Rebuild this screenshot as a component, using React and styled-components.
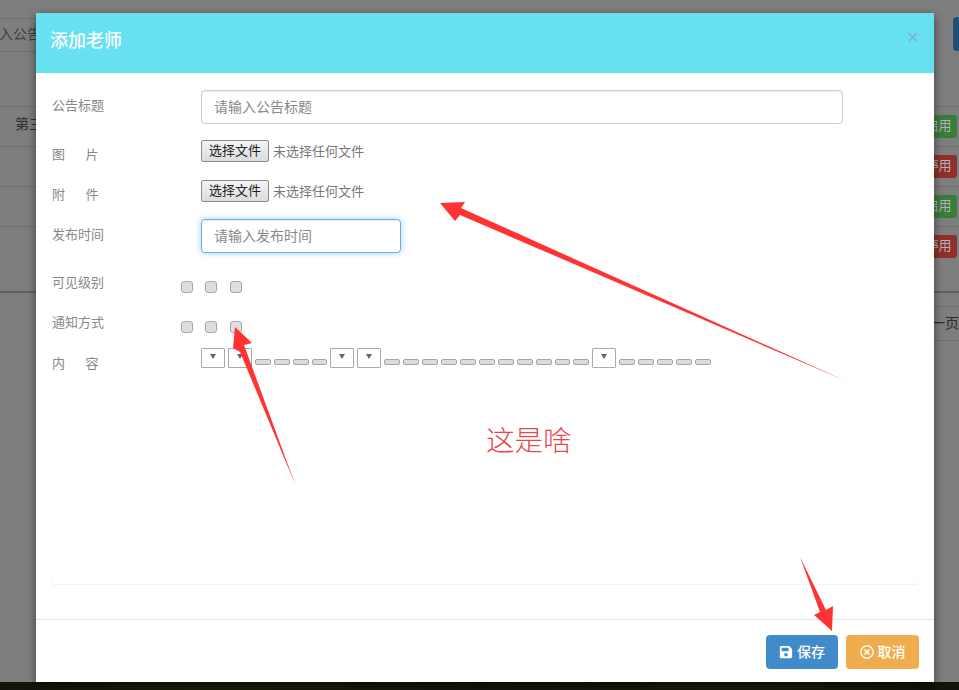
import React from 'react';
import styled, { createGlobalStyle } from 'styled-components';
import { FaSave, FaRegTimesCircle } from 'react-icons/fa';

const fontStack = '"Noto Sans CJK SC", "Liberation Sans", sans-serif';

const GlobalStyle = createGlobalStyle`
    html, body {
        margin: 0;
        padding: 0;
        overflow: hidden;
    }
    body {
        font-family: ${ fontStack };
        font-size: 14px;
    }
`;

const Page = styled.div`
    position: relative;
    display: flex;
    flex-direction: column;
    width: 959px;
    height: 690px;
    overflow: hidden;
    background: #7e7e7e;
`;

const Toolbar = styled.div`
    display: flex;
    justify-content: space-between;
    height: 89px;
    padding-top: 17px;
    box-sizing: content-box;
`;

const SearchBox = styled.div`
    width: 100px;
    height: 32px;
    margin-top: 1px;
    margin-left: -1px;
    border-top: 1px solid #6f6f6f;
    border-bottom: 1px solid #6f6f6f;
    color: #3f3f3f;
    line-height: 28px;
    white-space: nowrap;
`;

const SearchButton = styled.div`
    width: 20px;
    height: 34px;
    margin-right: -14px;
    border-radius: 4px;
    background: #1f4f78;
`;

const Table = styled.div`
    height: 185px;
    border-bottom: 2px solid #5f5f5f;
`;

const TableRow = styled.div`
    display: flex;
    justify-content: space-between;
    align-items: center;
    height: 40px;
    padding: 0 2px 0 15px;
    box-sizing: border-box;
    border-top: 1px solid #6e6e6e;
    color: #2f2f2f;
`;

const RowText = styled.span`
    padding-bottom: 8px;
`;

const StatusBadge = styled.div`
    width: 36px;
    height: 23px;
    padding-right: 1px;
    box-sizing: border-box;
    border-radius: 3px;
    background: ${ props => props.active ? '#3a7c3a' : '#8e2f2b' };
    color: #b4b4b4;
    font-size: 13px;
    line-height: 20px;
    text-align: center;
    white-space: nowrap;
`;

const Pager = styled.div`
    display: flex;
    justify-content: flex-end;
    margin-top: 13px;
`;

const PagerItem = styled.div`
    width: 40px;
    height: 33px;
    border: 1px solid #6e6e6e;
    border-right: none;
    color: #2a2a2a;
    line-height: 31px;
    text-align: right;
`;

const BottomStrip = styled.div`
    height: 8px;
    margin-top: auto;
    background: linear-gradient(90deg, #12140a, #1c1c08 20%, #14140c 50%, #1a1a0a 80%, #121208);
`;

const Modal = styled.div`
    position: absolute;
    top: 13px;
    left: 36px;
    display: flex;
    flex-direction: column;
    width: 898px;
    height: 669px;
    background: #fff;
    box-shadow: 0 3px 9px rgba(0, 0, 0, .5);
`;

const ModalHeader = styled.div`
    display: flex;
    justify-content: space-between;
    align-items: center;
    flex-shrink: 0;
    height: 60px;
    padding: 0 15px 0 14px;
    background: #67e0f2;
`;

const ModalTitle = styled.h4`
    margin: 0 0 8px;
    color: #fff;
    font-size: 18px;
    font-weight: 500;
`;

const CloseButton = styled.span`
    margin-top: -14px;
    color: #7fb5c4;
    font-family: "Liberation Sans", sans-serif;
    font-size: 21px;
    font-weight: 400;
    line-height: 1;
`;

const ModalBody = styled.div`
    flex: 1;
    padding: 17px 15px 34px;
    box-sizing: border-box;
    display: flex;
`;

const Panel = styled.div`
    flex: 1;
    border-bottom: 1px solid #f2f2f2;
    border-left: 1px solid #fbfbfb;
    border-right: 1px solid #fbfbfb;
    border-radius: 4px;
`;

const FormRow = styled.div`
    display: grid;
    grid-template-columns: ${ props => props.labelWidth || 149 }px 1fr;
    height: ${ props => props.height }px;
`;

const Label = styled.div`
    padding-top: ${ props => props.top || 0 }px;
    color: #888;
    font-size: 13px;
    line-height: 18px;
    white-space: pre;
`;

const TextInput = styled.input`
    display: block;
    width: ${ props => props.width }px;
    height: 34px;
    padding: 5px 12px 7px 12px;
    box-sizing: border-box;
    border: 1px solid ${ props => props.focused ? '#66afe9' : '#ccc' };
    border-radius: 4px;
    outline: none;
    box-shadow: ${ props => props.focused
        ? 'inset 0 1px 1px rgba(0, 0, 0, .075), 0 0 6px rgba(102, 175, 233, .6)'
        : 'inset 0 1px 1px rgba(0, 0, 0, .075)' };
    font-family: ${ fontStack };
    font-size: 14px;
    &::placeholder {
        color: #888;
        opacity: 1;
    }
`;

const FileField = styled.div`
    display: flex;
    align-items: center;
    gap: 4px;
    height: 22px;
    color: #777;
    font-size: 13px;
`;

const FileHint = styled.span`
    margin-top: -2px;
`;

const FileButton = styled.button`
    width: 68px;
    height: 22px;
    padding: 0 0 2px;
    border: 1px solid #8a8a8a;
    border-radius: 2px;
    background: linear-gradient(#f4f4f4, #dcdcdc);
    color: #222;
    font-family: ${ fontStack };
    font-size: 13px;
    line-height: 18px;
`;

const CheckGroup = styled.div`
    display: flex;
    gap: 12px;
    padding-top: 8px;
`;

const CheckBox = styled.span`
    width: 12px;
    height: 12px;
    border: 1px solid #a8a8a8;
    border-radius: 3px;
    box-sizing: border-box;
    background: #dedede;
    &:last-child {
        margin-left: 1px;
    }
`;

const Toolstrip = styled.div`
    display: flex;
    align-items: flex-end;
    gap: 3px;
    height: 20px;
`;

const ToolSelect = styled.span`
    display: flex;
    justify-content: center;
    width: 24px;
    height: 20px;
    padding-top: 5px;
    box-sizing: border-box;
    border: 1px solid #aaa;
    border-radius: 1px;
    background: #fff;
    &::after {
        content: '';
        width: 0;
        height: 0;
        border-left: 3px solid transparent;
        border-right: 3px solid transparent;
        border-top: 5px solid #666;
    }
`;

const ToolButton = styled.span`
    width: ${ props => props.narrow ? 15 : 16 }px;
    height: 6px;
    margin-bottom: 3px;
    border: 1px solid #a5a5a5;
    border-radius: 2px;
    box-sizing: border-box;
    background: #dcdcdc;
`;

const ModalFooter = styled.div`
    display: flex;
    justify-content: flex-end;
    gap: 8px;
    height: 63px;
    padding: 15px 15px 14px;
    box-sizing: border-box;
    border-top: 1px solid #e5e5e5;
`;

const FooterButton = styled.button`
    display: flex;
    align-items: center;
    justify-content: center;
    gap: 4px;
    width: ${ props => props.width }px;
    height: 34px;
    padding: 0;
    border: none;
    border-radius: 4px;
    background: ${ props => props.color };
    color: #fff;
    font-family: ${ fontStack };
    font-size: 14px;
    font-weight: 500;
`;

const ButtonText = styled.span`
    margin-top: -3px;
`;

const Overlay = styled.svg`
    position: absolute;
    top: 0;
    left: 0;
    pointer-events: none;
`;

const Note = styled.div`
    position: absolute;
    top: 419px;
    left: 486px;
    color: #e8484c;
    font-size: 28.5px;
    font-weight: 300;
    line-height: 40px;
`;

const rows = [
    { active: true, text: '第三方' },
    { active: false },
    { active: true },
    { active: false }
];

// s = select, b = small button, n = the narrower small button
const toolstrip = 'ssbbbnssbbbbbbbbbnbsbbbbb'.split('');

const App = () => (
    <Page>
        <GlobalStyle/>
        <Toolbar>
            <SearchBox>入公告</SearchBox>
            <SearchButton/>
        </Toolbar>
        <Table>
            {rows.map((row, idx) => (
                <TableRow key={idx}>
                    <RowText>{row.text}</RowText>
                    <StatusBadge active={row.active}>{row.active ? '启用' : '停用'}</StatusBadge>
                </TableRow>
            ))}
        </Table>
        <Pager>
            <PagerItem>一页</PagerItem>
        </Pager>
        <BottomStrip/>

        <Modal>
            <ModalHeader>
                <ModalTitle>添加老师</ModalTitle>
                <CloseButton>×</CloseButton>
            </ModalHeader>
            <ModalBody>
                <Panel>
                    <FormRow height={50}>
                        <Label top={6}>公告标题</Label>
                        <TextInput width={642} placeholder="请输入公告标题"/>
                    </FormRow>
                    <FormRow height={40}>
                        <Label top={5}>{'图       片'}</Label>
                        <FileField>
                            <FileButton>选择文件</FileButton>
                            <FileHint>未选择任何文件</FileHint>
                        </FileField>
                    </FormRow>
                    <FormRow height={39}>
                        <Label top={5}>{'附       件'}</Label>
                        <FileField>
                            <FileButton>选择文件</FileButton>
                            <FileHint>未选择任何文件</FileHint>
                        </FileField>
                    </FormRow>
                    <FormRow height={54}>
                        <Label top={6}>发布时间</Label>
                        <TextInput width={200} focused placeholder="请输入发布时间"/>
                    </FormRow>
                    <FormRow height={40} labelWidth={129}>
                        <Label>可见级别</Label>
                        <CheckGroup>
                            <CheckBox/><CheckBox/><CheckBox/>
                        </CheckGroup>
                    </FormRow>
                    <FormRow height={35} labelWidth={129}>
                        <Label>通知方式</Label>
                        <CheckGroup>
                            <CheckBox/><CheckBox/><CheckBox/>
                        </CheckGroup>
                    </FormRow>
                    <FormRow height={30}>
                        <Label top={6}>{'内       容'}</Label>
                        <Toolstrip>
                            {toolstrip.map((item, idx) => item === 's'
                                ? <ToolSelect key={idx}/>
                                : <ToolButton key={idx} narrow={item === 'n'}/>)}
                        </Toolstrip>
                    </FormRow>
                </Panel>
            </ModalBody>
            <ModalFooter>
                <FooterButton width={72} color="#428bca"><FaSave size={14}/><ButtonText>保存</ButtonText></FooterButton>
                <FooterButton width={73} color="#f0ad4e"><FaRegTimesCircle size={14}/><ButtonText>取消</ButtonText></FooterButton>
            </ModalFooter>
        </Modal>

        <Overlay width="959" height="690" viewBox="0 0 959 690">
            <polygon fill="#ff3333" points="440,203 465,202 461,208 846,381 460,215 455,221"/>
            <polygon fill="#ff3333" points="235,327 252,343 244,345 295,484 240,352 233,348"/>
            <polygon fill="#ff3333" points="800,557 826,610 833,606 832,631 814,615 820,612"/>
        </Overlay>
        <Note>这是啥</Note>
    </Page>
);

export default App;
